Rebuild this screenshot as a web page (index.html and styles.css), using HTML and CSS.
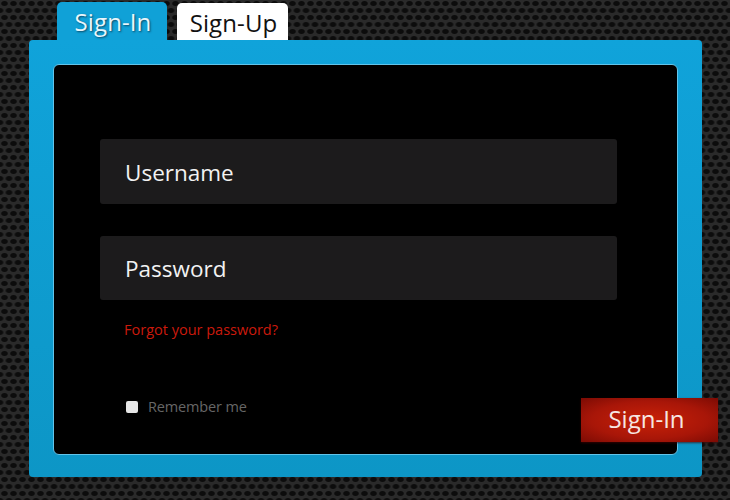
FILE: index.html
```html
<!DOCTYPE html>
<html lang="en">
<head>
  <meta charset="UTF-8">
  <title>Sign-In</title>
  <link rel="stylesheet" href="styles.css">
</head>
<body>
  <div class="login">
    <div class="tabs">
      <a class="tab active">Sign-In</a>
      <a class="tab">Sign-Up</a>
    </div>
    <div class="panel">
      <form class="inner">
        <div class="field">Username</div>
        <div class="field">Password</div>
        <a class="forgot">Forgot your password?</a>
        <label class="remember"><span class="check"></span>Remember me</label>
        <button class="submit" type="button">Sign-In</button>
      </form>
    </div>
  </div>
</body>
</html>
```

FILE: styles.css
```css
html, body {
  margin: 0;
  padding: 0;
  height: 100%;
}

body {
  overflow: hidden;
  font-family: "Open Sans", "Noto Sans", sans-serif;
  background-color: #2a2a2a;
  background-image:
    radial-gradient(ellipse 4px 3px at 4.5px 3.5px, #0c0c0c 65%, transparent 100%),
    radial-gradient(ellipse 4px 3px at 4.5px 3.5px, #0c0c0c 65%, transparent 100%);
  background-size: 9px 14px;
  background-position: 0 0, 4.5px 7px;
}

.login {
  width: 673px;
  margin-left: 29px;
  padding-top: 2px;
}

.tabs {
  display: flex;
  align-items: flex-end;
  gap: 10px;
  height: 38px;
  margin-left: 28px;
}

.tab {
  width: 111px;
  height: 37px;
  line-height: 39px;
  padding-left: 2px;
  box-sizing: border-box;
  text-align: center;
  font-size: 24px;
  letter-spacing: 0.1px;
  color: #111;
  background: #fff;
  border-radius: 5px 5px 0 0;
}

.tab.active {
  width: 110px;
  height: 38px;
  color: #e8f6fc;
  background: #10a1d7;
  text-shadow: 1px 1px 2px #0a4a66;
}

.panel {
  height: 437px;
  padding: 24px 24px 22px 24px;
  box-sizing: border-box;
  background: linear-gradient(#10a3da, #0d96c6);
  border-radius: 4px;
}

.inner {
  position: relative;
  display: flex;
  flex-direction: column;
  height: 391px;
  padding: 74px 60px 0 46px;
  box-sizing: border-box;
  background: #000;
  border: 1px solid #62c4ea;
  border-radius: 6px;
}

.field {
  height: 65px;
  line-height: 67px;
  padding-left: 25px;
  margin-bottom: 32px;
  font-size: 22.5px;
  color: #f2f2f2;
  background: #1c1b1c;
  border-radius: 3px;
}

.field + .field {
  height: 64px;
  line-height: 65px;
}

.forgot {
  margin-top: -12px;
  padding-left: 24px;
  font-size: 14.5px;
  line-height: 20px;
  letter-spacing: 0;
  color: #cb1a0c;
}

.remember {
  display: flex;
  align-items: center;
  gap: 10px;
  margin-top: 57px;
  padding-left: 26px;
  font-size: 14.5px;
  line-height: 20px;
  letter-spacing: -0.15px;
  color: #666;
}

.check {
  width: 12px;
  height: 12px;
  background: #e6e6e6;
  border-radius: 2px;
}

.submit {
  position: absolute;
  left: 527px;
  top: 333px;
  width: 137px;
  height: 44px;
  padding: 0 6px 4px 0;
  border: 0;
  font-family: inherit;
  font-size: 24px;
  letter-spacing: 0;
  color: #f6e6e2;
  background: radial-gradient(ellipse at center, #c92108 0%, #a81608 60%, #7c0b04 100%);
  box-shadow: 0 1px 2px rgba(70, 0, 0, 0.7);
}
```
